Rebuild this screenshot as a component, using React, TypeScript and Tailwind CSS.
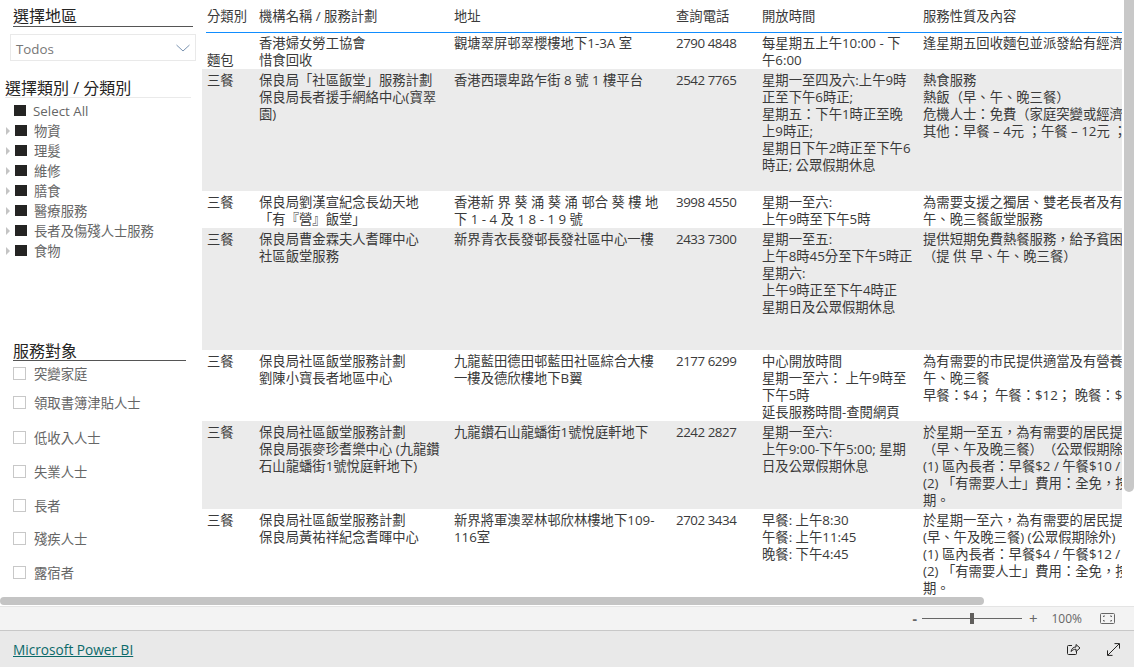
const FONT = "font-['Open_Sans','Noto_Sans_CJK_TC',sans-serif] [text-spacing-trim:space-all]"

const CATEGORIES = ['物資', '理髮', '維修', '膳食', '醫療服務', '長者及傷殘人士服務', '食物']

const AUDIENCES = [
  { label: '突變家庭', cls: 'h-[29px]' },
  { label: '領取書簿津貼人士', cls: 'h-[35px]' },
  { label: '低收入人士', cls: 'h-[34px]' },
  { label: '失業人士', cls: 'h-[34px]' },
  { label: '長者', cls: 'h-[33px]' },
  { label: '殘疾人士', cls: 'h-[34px]' },
  { label: '露宿者', cls: 'h-[20px]' }
]

type Row = {
  cat: string
  org: string[]
  addr: string[]
  tel: string
  hours: string[]
  info: string[]
  cls: string
}

const ROWS: Row[] = [
  {
    cat: '麵包',
    org: ['香港婦女勞工協會', '惜食回收'],
    addr: ['觀塘翠屏邨翠櫻樓地下1-3A 室'],
    tel: '2790 4848',
    hours: ['每星期五上午10:00 - 下', '午6:00'],
    info: ['逢星期五回收麵包並派發給有經濟困難人士'],
    cls: 'h-[36px] pt-[2px] bg-white'
  },
  {
    cat: '三餐',
    org: ['保良局「社區飯堂」服務計劃', '保良局長者援手網絡中心(寶翠', '園)'],
    addr: ['香港西環卑路乍街 8 號 1 樓平台'],
    tel: '2542 7765',
    hours: ['星期一至四及六:上午9時', '正至下午6時正;', '星期五：下午1時正至晚', '上9時正;', '星期日下午2時正至下午6', '時正; 公眾假期休息'],
    info: ['熱食服務', '熱飯（早、午、晚三餐）', '危機人士：免費（家庭突變或經濟困難）', '其他：早餐 – 4元 ；午餐 – 12元 ；晚餐'],
    cls: 'h-[122px] pt-[3px] mb-px bg-[#ebebeb]'
  },
  {
    cat: '三餐',
    org: ['保良局劉漢宣紀念長幼天地', '「有『營』飯堂」'],
    addr: ['香港新 界 葵 涌 葵 涌 邨合 葵 樓 地', '下 1 - 4 及 1 8 - 1 9 號'],
    tel: '3998 4550',
    hours: ['星期一至六:', '上午9時至下午5時'],
    info: ['為需要支援之獨居、雙老長者及有需要人士', '午、晚三餐飯堂服務'],
    cls: 'h-[36px] pt-[2px] bg-white'
  },
  {
    cat: '三餐',
    org: ['保良局曹金霖夫人耆暉中心', '社區飯堂服務'],
    addr: ['新界青衣長發邨長發社區中心一樓'],
    tel: '2433 7300',
    hours: ['星期一至五:', '上午8時45分至下午5時正', '星期六:', '上午9時正至下午4時正', '星期日及公眾假期休息'],
    info: ['提供短期免費熱餐服務，給予貧困長者', '（提 供 早、午、晚三餐）'],
    cls: 'h-[122px] pt-[3px] mb-px bg-[#ebebeb]'
  },
  {
    cat: '三餐',
    org: ['保良局社區飯堂服務計劃', '劉陳小寶長者地區中心'],
    addr: ['九龍藍田德田邨藍田社區綜合大樓', '一樓及德欣樓地下B翼'],
    tel: '2177 6299',
    hours: ['中心開放時間', '星期一至六： 上午9時至', '下午5時', '延長服務時間-查閱網頁'],
    info: ['為有需要的市民提供適當及有營養的早、', '午、晚三餐', '早餐：$4； 午餐：$12； 晚餐：$12'],
    cls: 'h-[70px] pt-[2px] bg-white'
  },
  {
    cat: '三餐',
    org: ['保良局社區飯堂服務計劃', '保良局張麥珍耆樂中心 (九龍鑽', '石山龍蟠街1號悅庭軒地下)'],
    addr: ['九龍鑽石山龍蟠街1號悅庭軒地下'],
    tel: '2242 2827',
    hours: ['星期一至六:', '上午9:00-下午5:00; 星期', '日及公眾假期休息'],
    info: ['於星期一至五，為有需要的居民提供膳食', '（早、午及晚三餐）（公眾假期除外）', '(1) 區內長者：早餐$2 / 午餐$10 / 晚餐', '(2) 「有需要人士」費用：全免，按個案', '期。'],
    cls: 'h-[88px] pt-[3px] mb-px bg-[#ebebeb]'
  },
  {
    cat: '三餐',
    org: ['保良局社區飯堂服務計劃', '保良局黃祐祥紀念耆暉中心'],
    addr: ['新界將軍澳翠林邨欣林樓地下109-', '116室'],
    tel: '2702 3434',
    hours: ['早餐: 上午8:30', '午餐: 上午11:45', '晚餐: 下午4:45'],
    info: ['於星期一至六，為有需要的居民提供膳食', '(早、午及晚三餐) (公眾假期除外)', '(1) 區內長者：早餐$4 / 午餐$12 / 晚餐', '(2) 「有需要人士」費用：全免，按個案', '期。'],
    cls: 'h-[87px] pt-[2px] bg-white'
  }
]

const COLS = 'grid grid-cols-[52px_195px_222px_86px_161px_204px]'

function Lines({ lines, cls = '' }: { lines: string[]; cls?: string }) {
  return (
    <div className={`overflow-hidden pl-[5px] ${cls}`}>
      {lines.map((l, i) => (
        <div key={i} className="whitespace-pre">
          {l}
        </div>
      ))}
    </div>
  )
}

function Sidebar() {
  return (
    <aside className="w-[202px] shrink-0 text-[13.33px] leading-[17px] text-[#666]">
      <div className="ml-[13px] mr-[9px] h-[27px] border-b border-[#555] pt-[7px] text-[16px] leading-[18px] text-[#252423]">
        選擇地區
      </div>
      <div className="ml-[10px] mr-[6px] mt-[7px] flex h-[27px] items-center justify-between border border-[#e9e9e9] pl-[5px] pr-[5px] text-[#777]">
        <span className="pt-[3px]">Todos</span>
        <svg width="14" height="8" viewBox="0 0 14 8" fill="none" stroke="#7a93b0">
          <path d="M0.5 1 7 7 13.5 1" />
        </svg>
      </div>
      <div className="ml-[5px] mr-[11px] mt-[18px] h-[19px] border-b border-[#eaeaea] text-[16px] leading-[18px] text-[#252423]">
        選擇類別 / 分類別
      </div>
      <div className="mt-[3px]">
        <div className="flex h-[20px] items-center pl-[14px]">
          <span className="mb-[2px] h-[11px] w-[12px] bg-[#252423]" />
          <span className="ml-[7px]">Select All</span>
        </div>
        {CATEGORIES.map((c) => (
          <div key={c} className="flex h-[20px] items-center pl-[6px]">
            <svg width="4" height="8" viewBox="0 0 4 8" fill="#c4c4c4">
              <path d="M0 0 4 4 0 8Z" />
            </svg>
            <span className="mb-[2px] ml-[5px] h-[11px] w-[12px] bg-[#252423]" />
            <span className="ml-[7px]">{c}</span>
          </div>
        ))}
      </div>
      <div className="ml-[13px] mr-[16px] mt-[81px] h-[19px] border-b border-[#555] text-[16px] leading-[18px] text-[#252423]">
        服務對象
      </div>
      <div className="mt-[6px] pl-[13px]">
        {AUDIENCES.map((a) => (
          <div key={a.label} className={`flex items-start ${a.cls}`}>
            <span className="h-[13px] w-[13px] border border-[#c8c8c8]" />
            <span className="ml-[8px] mt-[-1px]">{a.label}</span>
          </div>
        ))}
      </div>
    </aside>
  )
}

function ResultTable() {
  return (
    <section className="w-[920px] shrink-0 overflow-hidden text-[13.33px] leading-[17px] text-[#3a3a3a]">
      <div className={`${COLS} h-[32px] items-center`}>
        {['分類別', '機構名稱 / 服務計劃', '地址', '查詢電話', '開放時間', '服務性質及內容'].map((h) => (
          <div key={h} className="pl-[5px]">
            {h}
          </div>
        ))}
      </div>
      <div className="ml-[4px] h-px bg-[#118dff]" />
      {ROWS.map((r) => (
        <div key={r.tel} className={`${COLS} ${r.cls}`}>
          <div className="pl-[5px]">
            {r.tel === '2790 4848' ? <div className="mt-[17px]">{r.cat}</div> : r.cat}
          </div>
          <Lines lines={r.org} />
          <Lines lines={r.addr} />
          <Lines lines={[r.tel]} cls="tracking-[-0.45px]" />
          <Lines lines={r.hours} />
          <Lines lines={r.info} />
        </div>
      ))}
    </section>
  )
}

function ZoomBar() {
  return (
    <div className="flex h-[24px] items-center justify-end border-t border-[#e4e4e4] bg-[#f3f3f3] pr-[19px] text-[12px] text-[#666]">
      <span className="mr-[5px] text-[14px] font-bold leading-none">-</span>
      <div className="flex w-[100px] items-center">
        <span className="h-px flex-1 bg-[#666]" />
        <span className="h-[11px] w-[4px] bg-[#605e5c]" />
        <span className="h-px flex-1 bg-[#666]" />
      </div>
      <span className="ml-[7px] text-[15px] leading-none">+</span>
      <span className="ml-[14px]">100%</span>
      <svg className="ml-[18px]" width="15" height="11" viewBox="0 0 15 11" fill="none" stroke="#666">
        <rect x="0.5" y="0.5" width="14" height="10" rx="1" />
        <path d="M3.5 4V3H5M10 3h1.5v1M11.5 7v1H10M5 8H3.5V7" />
      </svg>
    </div>
  )
}

function Footer() {
  return (
    <div className="flex h-[37px] items-center justify-between border-t border-[#c8c8c8] bg-[#e9e9e9] pl-[13px] pr-[14px]">
      <a className="pt-[2px] text-[13.67px] text-[#0b6a6a] underline" href="#">
        Microsoft Power BI
      </a>
      <div className="flex items-center">
        <svg width="14" height="13" viewBox="0 0 14 13" fill="none" stroke="#252423">
          <path d="M5 2.5H1.5a1 1 0 0 0-1 1v7a1 1 0 0 0 1 1h7a1 1 0 0 0 1-1V8" />
          <path d="M4 8.5C4.5 5.5 6.5 4 9 4V1.5L13 5 9 8.5V6.2C7 6.2 5.5 7 4 8.5Z" />
        </svg>
        <svg className="ml-[26px]" width="13" height="13" viewBox="0 0 13 13" fill="none" stroke="#252423">
          <path d="M0.8 12.2 12.2 0.8M7.5 0.6h5v5M5.5 12.4h-5v-5" />
        </svg>
      </div>
    </div>
  )
}

export default function App() {
  return (
    <div className={`flex h-[667px] w-[1134px] flex-col overflow-hidden bg-white ${FONT}`}>
      <div className="flex h-[597px]">
        <Sidebar />
        <ResultTable />
        <div className="ml-[2px] h-[492px] w-[10px] rounded-b-[5px] bg-[#c8c8c8]" />
      </div>
      <div className="h-[8px] w-[984px] rounded-[4px] bg-[#c4c4c4]" />
      <div className="h-px" />
      <ZoomBar />
      <Footer />
    </div>
  )
}
